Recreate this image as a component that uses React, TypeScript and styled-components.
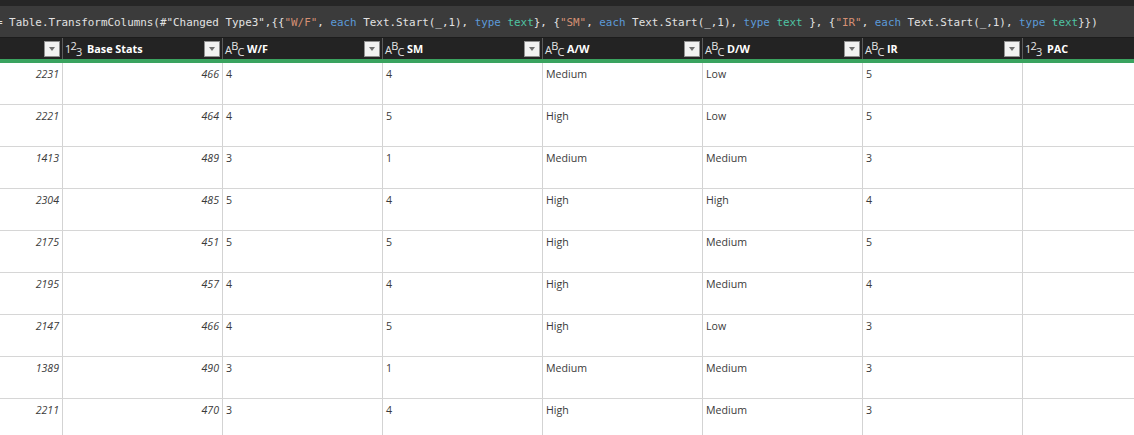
import React from "react";
import styled, { createGlobalStyle } from "styled-components";

const GlobalStyle = createGlobalStyle`
  html, body {
    margin: 0;
    padding: 0;
    background: #ffffff;
    overflow: hidden;
  }
  #root {
    width: 1134px;
    height: 435px;
    overflow: hidden;
  }
`;

const COLS = "63px repeat(6, 160px) 1fr";

const Page = styled.div`
  width: 1134px;
  height: 435px;
  display: flex;
  flex-direction: column;
  background: #ffffff;
  overflow: hidden;
`;

const TopBand = styled.div`
  height: 6px;
  background: #262626;
  flex: none;
`;

const FormulaBar = styled.div`
  height: 31px;
  background: #3b3b3b;
  border-bottom: 1px solid #1c1c1c;
  display: flex;
  align-items: center;
  flex: none;
  overflow: hidden;
`;

const FormulaText = styled.div`
  font-family: "DejaVu Sans Mono", "Liberation Mono", monospace;
  font-size: 10.9px;
  color: #e2e2e2;
  white-space: pre;
  text-indent: -4px;
  padding-top: 1px;
`;

const Tok = styled.span<{ $kind: "str" | "kw" | "type" }>`
  color: ${(p) =>
    p.$kind === "str" ? "#d69074" : p.$kind === "kw" ? "#5b9ad8" : "#4fc4a4"};
`;

const HeaderRow = styled.div`
  display: grid;
  grid-template-columns: ${COLS};
  height: 21px;
  background: #232323;
  flex: none;
`;

const HeaderCell = styled.div<{ $last?: boolean }>`
  display: flex;
  align-items: center;
  padding: 0 2px 0 2px;
  border-right: ${(p) => (p.$last ? "none" : "1px solid #5c5c5c")};
  min-width: 0;
`;

const TypeIcon = styled.span`
  display: inline-flex;
  align-items: center;
  width: 19px;
  height: 16px;
  font-family: "Open Sans", "Liberation Sans", sans-serif;
  font-size: 11px;
  color: #e6e6e6;
  flex: none;
`;

const Glyph = styled.span<{ $shift: number }>`
  position: relative;
  top: ${(p) => p.$shift}px;
  line-height: 1;
  margin-right: -0.8px;
`;

const ColName = styled.span`
  margin-left: 3px;
  font-family: "Open Sans", "Liberation Sans", sans-serif;
  font-weight: 700;
  font-size: 10.8px;
  color: #ffffff;
  white-space: nowrap;
`;

const FilterButton = styled.span`
  margin-left: auto;
  width: 16px;
  height: 16px;
  box-sizing: border-box;
  background: #f2f2f2;
  border: 1px solid #8f8f8f;
  display: flex;
  align-items: center;
  justify-content: center;
  flex: none;
  &::after {
    content: "";
    width: 0;
    height: 0;
    border-left: 3.5px solid transparent;
    border-right: 3.5px solid transparent;
    border-top: 4px solid #707070;
  }
`;

const GreenRule = styled.div`
  height: 4px;
  background: #3aa35f;
  flex: none;
`;

const Body = styled.div`
  flex: 1;
  display: flex;
  flex-direction: column;
`;

const Row = styled.div`
  display: grid;
  grid-template-columns: ${COLS};
  height: 42px;
  box-sizing: border-box;
  border-bottom: 1px solid #d6d6d6;
  flex: none;
`;

const Cell = styled.div<{ $num?: boolean; $last?: boolean }>`
  border-right: ${(p) => (p.$last ? "none" : "1px solid #d3d3d3")};
  padding: 3px 3px 0 3px;
  text-align: ${(p) => (p.$num ? "right" : "left")};
  font-style: ${(p) => (p.$num ? "italic" : "normal")};
  font-family: "Open Sans", "Liberation Sans", sans-serif;
  font-size: 10.6px;
  line-height: 16px;
  color: #3a3a3a;
  white-space: nowrap;
  overflow: hidden;
`;

type TypeKind = "num" | "abc";

const NumIcon = () => (
  <TypeIcon>
    <Glyph $shift={0}>1</Glyph>
    <Glyph $shift={-3}>2</Glyph>
    <Glyph $shift={3}>3</Glyph>
  </TypeIcon>
);

const AbcIcon = () => (
  <TypeIcon>
    <Glyph $shift={1}>A</Glyph>
    <Glyph $shift={-3}>B</Glyph>
    <Glyph $shift={3}>C</Glyph>
  </TypeIcon>
);

const columns: { name: string; type: TypeKind }[] = [
  { name: "Base Stats", type: "num" },
  { name: "W/F", type: "abc" },
  { name: "SM", type: "abc" },
  { name: "A/W", type: "abc" },
  { name: "D/W", type: "abc" },
  { name: "IR", type: "abc" },
  { name: "PAC", type: "num" },
];

const rows: string[][] = [
  ["2231", "466", "4", "4", "Medium", "Low", "5"],
  ["2221", "464", "4", "5", "High", "Low", "5"],
  ["1413", "489", "3", "1", "Medium", "Medium", "3"],
  ["2304", "485", "5", "4", "High", "High", "4"],
  ["2175", "451", "5", "5", "High", "Medium", "5"],
  ["2195", "457", "4", "4", "High", "Medium", "4"],
  ["2147", "466", "4", "5", "High", "Low", "3"],
  ["1389", "490", "3", "1", "Medium", "Medium", "3"],
  ["2211", "470", "3", "4", "High", "Medium", "3"],
];

const StartCall = () => (
  <>
    Text.Start(_,1), <Tok $kind="kw">type</Tok> <Tok $kind="type">text</Tok>
  </>
);

export default function App() {
  return (
    <>
      <GlobalStyle />
      <Page>
        <TopBand />
        <FormulaBar>
          <FormulaText>
            {'= Table.TransformColumns(#"Changed Type3",{{'}
            <Tok $kind="str">"W/F"</Tok>, <Tok $kind="kw">each</Tok> <StartCall />
            {"}, {"}
            <Tok $kind="str">"SM"</Tok>, <Tok $kind="kw">each</Tok> <StartCall />
            {" }, {"}
            <Tok $kind="str">"IR"</Tok>, <Tok $kind="kw">each</Tok> <StartCall />
            {"}})"}
          </FormulaText>
        </FormulaBar>
        <HeaderRow>
          <HeaderCell>
            <FilterButton />
          </HeaderCell>
          {columns.map((c, i) => (
            <HeaderCell key={c.name} $last={i === columns.length - 1}>
              {c.type === "num" ? <NumIcon /> : <AbcIcon />}
              <ColName>{c.name}</ColName>
              {i < columns.length - 1 && <FilterButton />}
            </HeaderCell>
          ))}
        </HeaderRow>
        <GreenRule />
        <Body>
          {rows.map((r, ri) => (
            <Row key={ri}>
              <Cell $num>{r[0]}</Cell>
              <Cell $num>{r[1]}</Cell>
              <Cell>{r[2]}</Cell>
              <Cell>{r[3]}</Cell>
              <Cell>{r[4]}</Cell>
              <Cell>{r[5]}</Cell>
              <Cell>{r[6]}</Cell>
              <Cell $last />
            </Row>
          ))}
        </Body>
      </Page>
    </>
  );
}
